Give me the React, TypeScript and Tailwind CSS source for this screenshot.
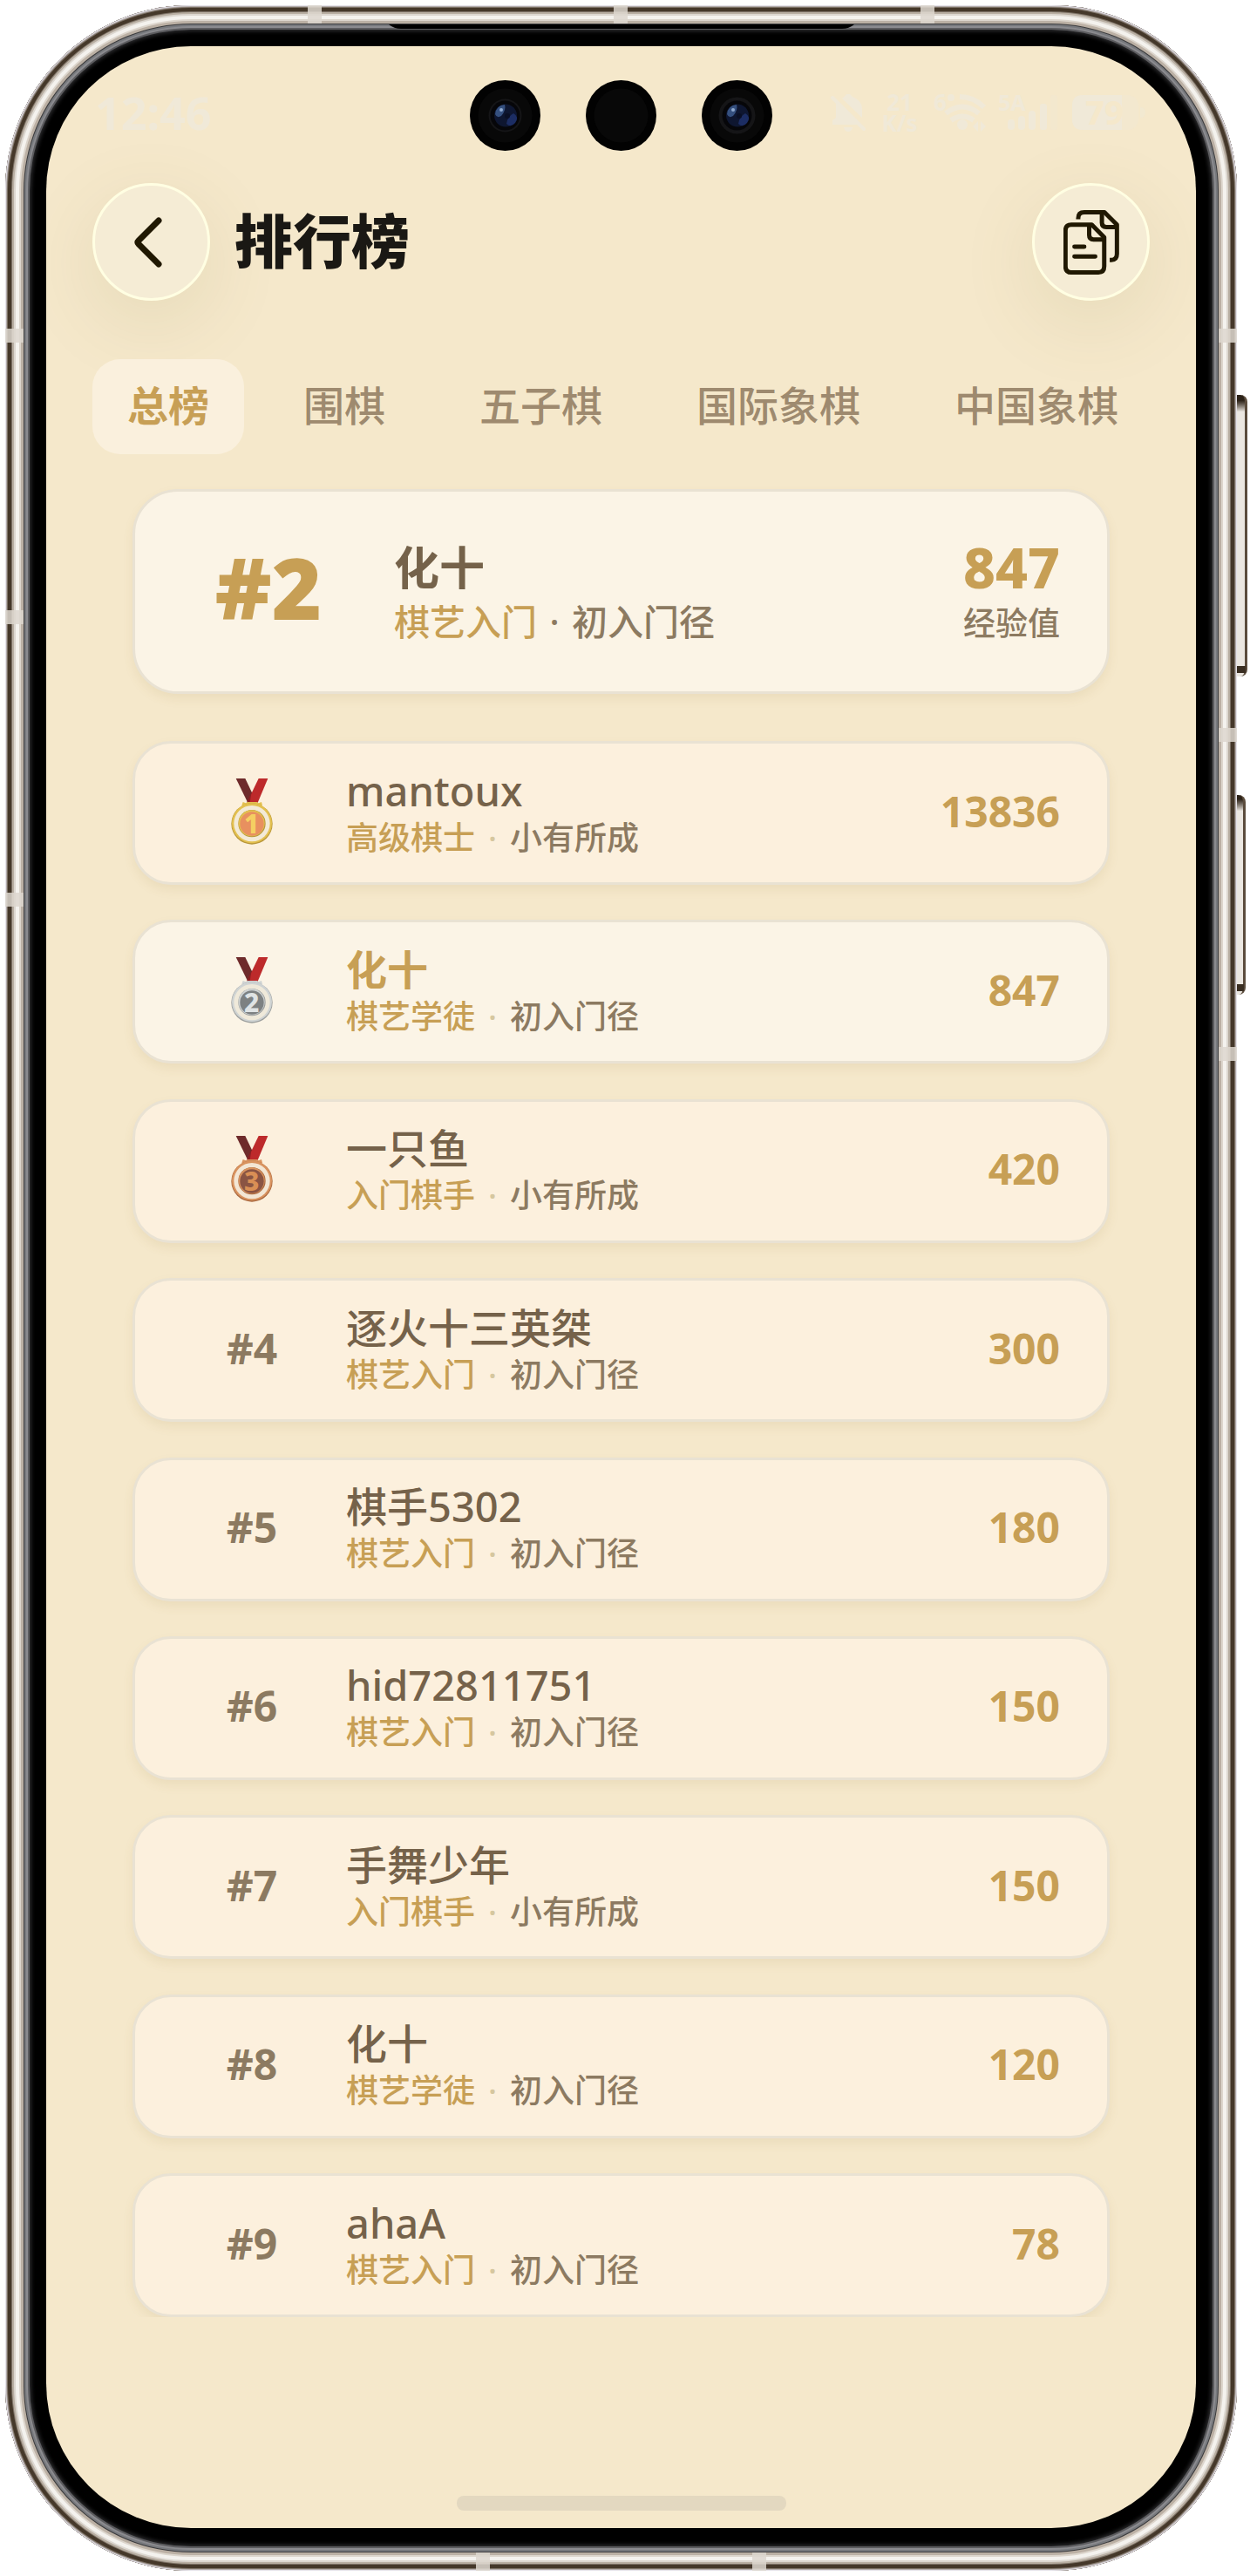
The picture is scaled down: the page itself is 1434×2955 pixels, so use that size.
import { useState } from 'react'
import clsx from 'clsx'

type Player = {
  name: string
  title: string
  level: string
  score: number
  me?: boolean
}

const TABS = ['总榜', '围棋', '五子棋', '国际象棋', '中国象棋']

const PLAYERS: Player[] = [
  { name: 'mantoux', title: '高级棋士', level: '小有所成', score: 13836 },
  { name: '化十', title: '棋艺学徒', level: '初入门径', score: 847, me: true },
  { name: '一只鱼', title: '入门棋手', level: '小有所成', score: 420 },
  { name: '逐火十三英桀', title: '棋艺入门', level: '初入门径', score: 300 },
  { name: '棋手5302', title: '棋艺入门', level: '初入门径', score: 180 },
  { name: 'hid72811751', title: '棋艺入门', level: '初入门径', score: 150 },
  { name: '手舞少年', title: '入门棋手', level: '小有所成', score: 150 },
  { name: '化十', title: '棋艺学徒', level: '初入门径', score: 120 },
  { name: 'ahaA', title: '棋艺入门', level: '初入门径', score: 78 },
]

const MEDALS = [
  { rim: '#e3c04f', edge: '#b8963a', ring: '#f3ead6', core: '#e8905f', digit: '#f5cf62' },
  { rim: '#cfd3d3', edge: '#9b9e9d', ring: '#efe9da', core: '#7d8182', digit: '#dfe3e4' },
  { rim: '#d9935f', edge: '#a9683f', ring: '#f3e6d4', core: '#8a5443', digit: '#d98f55' },
]

function Medal({ rank }: { rank: number }) {
  const c = MEDALS[rank - 1]
  return (
    <svg viewBox="33 27 144 228" className="w-12 h-[76px]" role="img" aria-label={`第${rank}名`}>
      <path d="M50 27H82L108 82L98 109H90Z" fill="#6e2b2b" />
      <path d="M128 27H160L125 110H88Z" fill="#bd2a2b" />
      <path d="M104 72L98 109H88Z" fill="#8b1f22" />
      <path d="M70 120L74 108L84 112L90 108H122L128 112L138 108L141 120Z" fill={c.rim} />
      <circle cx="105" cy="183" r="71" fill={c.edge} />
      <circle cx="105" cy="181" r="69" fill={c.rim} />
      <circle cx="105" cy="182" r="62" fill={c.ring} />
      <circle cx="105" cy="182" r="47" fill={c.edge} />
      <circle cx="104" cy="181" r="45" fill={c.rim} />
      <circle cx="105" cy="183" r="41" fill={c.core} />
      <text x="104" y="215" textAnchor="middle" fontSize="90" fontWeight="800" fill={c.digit}>
        {rank}
      </text>
    </svg>
  )
}

function StatusBar() {
  return (
    <div className="flex h-[152px] items-center justify-between pl-14 pr-[58px] text-[#f0e9d8]">
      <span className="text-[52px] leading-none font-bold">12:46</span>
      <div className="flex items-center">
        <svg viewBox="0 0 40 44" className="mr-[17px] h-11 w-10" fill="currentColor">
          <path d="M6 10L32 36H2V31L6 28Z" />
          <path d="M13 6Q16 4 18 1H22Q24 4 29 6Q36 11 36 18V28Z" />
          <path d="M2 5L38 41" stroke="currentColor" strokeWidth="4" strokeLinecap="round" />
          <path d="M15 39H25Q24 44 20 44Q16 44 15 39Z" />
        </svg>
        <div className="mr-[17px] flex w-11 flex-col text-center text-[26px] leading-6 font-bold">
          <span>21</span>
          <span>K/s</span>
        </div>
        <svg viewBox="0 0 62 46" className="mr-3 h-[46px] w-[62px] overflow-visible" fill="none" stroke="currentColor" strokeWidth="6">
          <path d="M14 24Q33 9 52 24" />
          <path d="M30 5Q46 5 58 17" />
          <path d="M20 32Q33 23 46 32" />
          <circle cx="33" cy="37" r="6" fill="currentColor" stroke="none" />
          <path d="M51 33V45L45 39ZM54 33V45L60 39Z" fill="currentColor" stroke="none" />
          <circle cx="20" cy="6" r="4" fill="currentColor" stroke="none" />
          <text x="0" y="21" fontSize="26" fontWeight="700" fill="currentColor" stroke="none">6</text>
        </svg>
        <svg viewBox="0 0 70 46" className="mr-[15px] h-[46px] w-[70px] overflow-visible" fill="currentColor">
          <text x="0" y="21" fontSize="25" fontWeight="700">5A</text>
          <rect x="11" y="31" width="8" height="12" rx="4" />
          <rect x="23" y="27" width="8" height="16" rx="4" />
          <rect x="35" y="21" width="8" height="22" rx="4" />
          <rect x="48" y="13" width="8" height="30" rx="3" />
          <rect x="60" y="3" width="8" height="40" rx="3" opacity="0.3" />
        </svg>
        <svg viewBox="0 0 84 40" className="h-10 w-[84px] overflow-visible" fill="currentColor">
          <rect width="76" height="40" rx="12" opacity="0.35" />
          <path d="M12 0H57V40H12Q0 40 0 28V12Q0 0 12 0Z" />
          <path d="M78 14Q84 14 84 20Q84 26 78 26Z" opacity="0.5" />
          <text x="37" y="34" textAnchor="middle" fontSize="38" fontWeight="800" fill="#f5e8cb">79</text>
        </svg>
      </div>
    </div>
  )
}

function Cameras() {
  return (
    <div className="absolute inset-x-0 top-[39px] flex justify-center gap-[52px]" aria-hidden="true">
      <Lens glass />
      <Lens />
      <Lens glass ringed />
    </div>
  )
}

function Lens({ glass, ringed }: { glass?: boolean; ringed?: boolean }) {
  return (
    <svg viewBox="0 0 81 81" className="size-[81px]">
      <circle cx="40.5" cy="40.5" r="40.5" fill="#020202" />
      <circle cx="40.5" cy="40.5" r="31" fill="#080808" />
      {glass && (
        <>
          <circle cx="40.5" cy="40.5" r={ringed ? 21 : 19} fill="#151517" />
          <circle cx="40.5" cy="40.5" r="17" fill="#060609" />
          <circle cx="41" cy="40.5" r="13" fill="#0e1630" />
          <path d="M29 39Q30 29 40 28Q42 34 36 41Q31 44 29 39Z" fill="#35507f" />
          <path d="M42 50Q43 42 50 38Q57 42 52 49Q47 55 42 50Z" fill="#1c2d63" />
          <circle cx="36" cy="34" r="2" fill="#8fa9cf" />
          <circle cx="43" cy="41" r="3" fill="#0a0f24" />
        </>
      )}
    </svg>
  )
}

function RoundButton({ label, children }: { label: string; children: React.ReactNode }) {
  return (
    <button
      type="button"
      aria-label={label}
      className="flex size-[135px] shrink-0 items-center justify-center rounded-full border-[3px] border-[#fffee2] bg-[#f5ecd5] text-[#201801] shadow-[0_24px_80px_8px_rgba(140,125,60,0.11)]"
    >
      {children}
    </button>
  )
}

function Header() {
  return (
    <header className="mt-[5px] flex items-center px-[53px]">
      <RoundButton label="返回">
        <svg viewBox="0 0 32 58" className="mr-2 h-[58px] w-8" fill="none" stroke="currentColor" strokeWidth="7" strokeLinecap="round" strokeLinejoin="round">
          <path d="M28 4L5 27Q3 29 5 31L28 54" />
        </svg>
      </RoundButton>
      <h1 className="ml-7 flex-1 pb-1 text-[67px] leading-[80px] font-black text-[#1a1814]">排行榜</h1>
      <RoundButton label="记录">
        <svg viewBox="842 444 193 222" className="h-[74px] w-16" fill="none" stroke="currentColor" strokeWidth="15" strokeLinejoin="round">
          <path d="M893 475V472Q893 451 914 451H984L1027 494V595Q1027 616 1008 616H1002" />
          <path d="M975 451V487Q975 502 990 502H1027" />
          <path d="M940 494H869Q849 494 849 514V638Q849 659 869 659H963Q983 659 983 638V538Z" />
          <path d="M931 494V530Q931 545 946 545H983" />
          <path d="M880 570H914M880 604H952" strokeLinecap="round" />
        </svg>
      </RoundButton>
    </header>
  )
}

function Tabs() {
  const [active, setActive] = useState(0)
  return (
    <nav className="mt-[67px] flex gap-7 overflow-hidden pl-[53px]">
      {TABS.map((tab, i) => (
        <button
          key={tab}
          type="button"
          onClick={() => setActive(i)}
          className={clsx(
            'h-[109px] shrink-0 rounded-[32px] px-10 pb-1 text-[47px] leading-[56px] whitespace-nowrap',
            i === active ? 'bg-[#faf0dd] font-bold text-[#c79f55]' : 'font-medium text-[#9e8a6f]',
          )}
        >
          {tab}
        </button>
      ))}
    </nav>
  )
}

function MyCard() {
  return (
    <section className="mx-[99px] mt-10 flex h-[235px] items-center rounded-[52px] border-[3px] border-[#e9e2d3] bg-[#fbf4e6] px-[54px] shadow-[0_6px_12px_rgba(160,130,60,0.1)]">
      <div className="w-[198px] pb-3 text-center text-[98px] leading-[110px] font-black text-[#c79f55]">#2</div>
      <div className="ml-[45px] flex-1 pt-1">
        <p className="text-[52px] leading-[64px] font-bold text-[#75624a]">化十</p>
        <p className="flex text-[41px] leading-[60px] font-medium text-[#8c7a61]">
          <span className="text-[#c79f55]">棋艺入门</span>
          <span className="w-10 text-center">·</span>
          <span>初入门径</span>
        </p>
      </div>
      <div className="pt-1 text-right">
        <p className="text-[64px] leading-[68px] font-extrabold text-[#c79f55]">847</p>
        <p className="text-[37px] leading-[60px] font-medium text-[#8c7a61]">经验值</p>
      </div>
    </section>
  )
}

function PlayerRow({ player, rank }: { player: Player; rank: number }) {
  return (
    <li
      className={clsx(
        'flex h-[165px] shrink-0 items-center rounded-[44px] border-[3px] border-[#e9e2d3] px-[54px] shadow-[0_6px_12px_rgba(160,130,60,0.1)]',
        player.me ? 'bg-[#fbf4e6]' : 'bg-[#fcf0dd]',
      )}
    >
      <div className="flex w-40 justify-center pb-1 text-[48px] leading-[56px] font-bold text-[#8c7a61]">
        {rank <= 3 ? <Medal rank={rank} /> : `#${rank}`}
      </div>
      <div className="ml-7 flex-1">
        <p className={clsx('text-[47px] leading-[56px]', player.me ? 'font-bold text-[#c79f55]' : 'font-medium text-[#75624a]')}>
          {player.name}
        </p>
        <p className="flex text-[37px] leading-[52px] font-medium text-[#8c7a61]">
          <span className="text-[#c79f55]">{player.title}</span>
          <span className="w-10 text-center text-[#d6c79f]">·</span>
          <span>{player.level}</span>
        </p>
      </div>
      <span className="pb-1 text-[48px] leading-[56px] font-bold text-[#c79f55]">{player.score}</span>
    </li>
  )
}

// Antenna breaks, speaker slit and side keys on the phone's metal rim
function FrameDetails() {
  return (
    <div aria-hidden="true">
      <div className="absolute top-0 left-[347px] h-[21px] w-4 bg-[#ddd7cf]/85" />
      <div className="absolute top-0 left-[698px] h-[21px] w-4 bg-[#ddd7cf]/85" />
      <div className="absolute top-0 left-[1050px] h-[21px] w-4 bg-[#ddd7cf]/85" />
      <div className="absolute bottom-0 left-[540px] h-[21px] w-4 bg-[#ddd7cf]/85" />
      <div className="absolute bottom-0 left-[857px] h-[21px] w-4 bg-[#ddd7cf]/85" />
      <div className="absolute top-[371px] left-0 h-4 w-[21px] bg-[#ddd7cf]/85" />
      <div className="absolute top-[694px] left-0 h-4 w-[21px] bg-[#ddd7cf]/85" />
      <div className="absolute top-[1018px] left-0 h-4 w-[21px] bg-[#ddd7cf]/85" />
      <div className="absolute top-[371px] right-0 h-4 w-[21px] bg-[#ddd7cf]/85" />
      <div className="absolute top-[829px] right-0 h-4 w-[21px] bg-[#ddd7cf]/85" />
      <div className="absolute top-[1195px] right-0 h-4 w-[21px] bg-[#ddd7cf]/85" />
      <svg viewBox="0 0 534 5" className="absolute inset-x-0 top-[22px] mx-auto h-[5px] w-[534px]">
        <path d="M0 0H534Q528 5 520 5H14Q6 5 0 0Z" fill="#000" />
      </svg>
      <div className="absolute top-[447px] -right-3 h-[323px] w-3 rounded-r-lg border-r-3 border-[#5b4c3d] bg-linear-to-b from-[#2c2218] from-2% via-[#ebe7e1] via-6% to-[#ebe7e1] to-94%" />
      <div className="absolute top-[906px] -right-2.5 h-[229px] w-2.5 rounded-r-lg border-r-3 border-[#5b4c3d] bg-linear-to-b from-[#2c2218] from-2% via-[#ebe7e1] via-8% to-[#ebe7e1] to-94%" />
      <div className="absolute top-[758px] -right-2.5 h-2 w-2.5 bg-[#3a2e22]" />
      <div className="absolute top-[1123px] -right-2 h-2 w-2 bg-[#3a2e22]" />
    </div>
  )
}

export default function App() {
  return (
    <div className="flex min-h-screen bg-white pt-[6px] pr-[15px] pb-[6px] pl-[6px] font-['Noto_Sans','Noto_Sans_CJK_SC',sans-serif]">
      <div className="relative flex flex-1 rounded-[213px] bg-black px-[47px] pt-[47px] pb-[49px] shadow-[inset_0_0_0_1px_#e4e1e8,inset_0_0_0_2px_#b3acab,inset_0_0_0_3px_#7d7266,inset_0_0_0_7px_#45382a,inset_0_0_0_8px_#7d7266,inset_0_0_0_10px_#b8aea2,inset_0_0_0_12px_#dcd7d0,inset_0_0_0_16px_#f4f2ee,inset_0_0_0_18px_#dcd5cc,inset_0_0_0_21px_#bbb0a4,inset_0_0_0_22px_#3c3c3e,inset_0_0_0_24px_#77797d,inset_0_0_0_26px_#8b8b8f,inset_0_0_0_28px_#5c5c5f,inset_0_0_4px_30px_#2b2b2d]">
        <FrameDetails />
        <main className="relative flex min-w-0 flex-1 flex-col overflow-hidden rounded-[166px] bg-[#f5e8cb]">
          <StatusBar />
          <Cameras />
          <Header />
          <Tabs />
          <MyCard />
          <ol className="flex flex-1 flex-col justify-between gap-5 overflow-hidden px-[99px] pt-[54px]">
            {PLAYERS.map((player, i) => (
              <PlayerRow key={i} player={player} rank={i + 1} />
            ))}
          </ol>
          <div className="flex h-[242px] shrink-0 items-end justify-center pb-5">
            <div className="h-[17px] w-[378px] rounded-lg bg-[#e3d8c0]" />
          </div>
        </main>
      </div>
    </div>
  )
}
